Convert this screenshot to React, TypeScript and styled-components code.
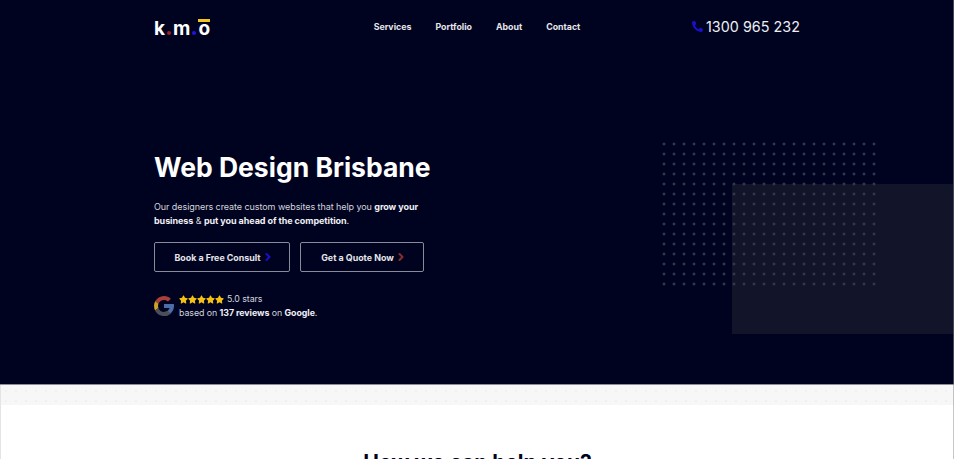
import { ChevronRight } from 'lucide-react';
import { FaPhoneAlt, FaStar } from 'react-icons/fa';
import styled, { createGlobalStyle } from 'styled-components';

const FONT = `Inter, "Liberation Sans", sans-serif`;

const GlobalStyle = createGlobalStyle`
  html, body {
    margin: 0;
    padding: 0;
    background: #fff;
    overflow: hidden;
  }
  body {
    font-family: ${FONT};
  }
`;

export default function App() {
  return (
    <Page>
      <GlobalStyle />
      <Hero>
        <Panel />
        <Dots />
        <Header>
          <Logo>
            <span>k</span>
            <LogoDot $color='#a01f28' />
            <span>m</span>
            <LogoDot $color='#2412e0' />
            <LogoO>o</LogoO>
          </Logo>
          <Nav>
            <NavLink href='#'>Services</NavLink>
            <NavLink href='#'>Portfolio</NavLink>
            <NavLink href='#'>About</NavLink>
            <NavLink href='#'>Contact</NavLink>
          </Nav>
          <Phone href='#'>
            <FaPhoneAlt color='#1c0fc8' size={11} />
            1300 965 232
          </Phone>
        </Header>
        <Content>
          <Title>Web Design Brisbane</Title>
          <Intro>
            Our designers create custom websites that help you <b>grow your business</b> &amp;{' '}
            <b>put you ahead of the competition</b>.
          </Intro>
          <Buttons>
            <Button href='#' $width={136}>
              Book a Free Consult
              <ChevronRight color='#1c0fc8' size={12} strokeWidth={4} />
            </Button>
            <Button href='#' $width={124}>
              Get a Quote Now
              <ChevronRight color='#8a2c2c' size={12} strokeWidth={4} />
            </Button>
          </Buttons>
          <Reviews>
            <GoogleIcon viewBox='4 4 40 40'>
              <path fill='#4a6fa8' d='M43.6 20.1H42V20H24v8h11.3c-1.6 4.7-6.1 8-11.3 8v8c11 0 20-9 20-20 0-1.3-.1-2.7-.4-3.9z' />
              <path fill='#a8403a' d='M6.3 14.7l6.6 4.8C14.7 15.1 19 12 24 12c3.1 0 5.8 1.2 8 3l5.7-5.7C34 6.1 29.3 4 24 4 16.3 4 9.7 8.3 6.3 14.7z' />
              <path fill='#c9a227' d='M6.3 14.7C4.8 17.5 4 20.7 4 24s.8 6.4 2.2 9.2l6.7-5.2c-.6-1.2-.9-2.6-.9-4s.4-3.1 1-4.5z' />
              <path fill='#4a4f58' d='M24 44c5.2 0 9.9-2 13.4-5.2l-6.2-5.2C29.2 35.1 26.7 36 24 36c-5.2 0-9.6-3.3-11.3-8l-6.5 5C9.5 39.6 16.2 44 24 44z' />
            </GoogleIcon>
            <ReviewText>
              <Rating>
                <Stars>
                  {[0, 1, 2, 3, 4].map((i) => (
                    <FaStar key={i} color='#f5c211' size={9} />
                  ))}
                </Stars>
                5.0 stars
              </Rating>
              <div>
                based on <b>137 reviews</b> on <b>Google</b>.
              </div>
            </ReviewText>
          </Reviews>
        </Content>
      </Hero>
      <Band />
      <Services>
        <Heading>How we can help you?</Heading>
      </Services>
      <EdgeLine />
    </Page>
  );
}

const Page = styled.div`
  position: relative;
  width: 954px;
  height: 459px;
  overflow: hidden;
  background: #fff;
`;
const Hero = styled.section`
  position: relative;
  height: 384px;
  background: #000320;
  border-bottom: 1px solid #8d8e9a;
  box-sizing: content-box;
`;
const Dots = styled.div`
  position: absolute;
  left: 662px;
  top: 142px;
  width: 220px;
  height: 150px;
  background-image: radial-gradient(circle at 2px 2px, #34364a 1.3px, transparent 1.7px);
  background-size: 10px 10px;
`;
const Panel = styled.div`
  position: absolute;
  left: 732px;
  top: 184px;
  width: 221px;
  height: 150px;
  background: #12142a;
`;
const Header = styled.header`
  position: relative;
  z-index: 2;
  display: grid;
  grid-template-columns: 1fr auto 1fr;
  align-items: center;
  width: 646px;
  height: 54px;
  margin: 0 auto;
`;
const Logo = styled.div`
  display: flex;
  align-items: baseline;
  justify-self: start;
  margin-top: 4px;
  font-size: 19px;
  line-height: 20px;
  font-weight: 700;
  color: #fff;
`;
const LogoDot = styled.i<{ $color: string }>`
  width: 4px;
  height: 4px;
  margin: 0 2px;
  border-radius: 50%;
  background: ${(p) => p.$color};
`;
const LogoO = styled.span`
  position: relative;
  &::before {
    content: '';
    position: absolute;
    left: 0;
    right: 0;
    top: 0;
    height: 3px;
    background: #f2c61f;
  }
`;
const Nav = styled.nav`
  display: flex;
  gap: 24px;
  margin-bottom: 2px;
`;
const NavLink = styled.a`
  font-size: 8.8px;
  font-weight: 700;
  color: #e6e6ea;
  text-decoration: none;
`;
const Phone = styled.a`
  justify-self: end;
  display: flex;
  align-items: center;
  gap: 3px;
  margin-bottom: 2px;
  font-size: 14.3px;
  font-weight: 400;
  letter-spacing: 0.05px;
  color: #eeeef2;
  text-decoration: none;
`;
const Content = styled.div`
  position: relative;
  z-index: 2;
  width: 646px;
  margin: 0 auto;
  padding-top: 96px;
`;
const Title = styled.h1`
  margin: 0;
  font-size: 26.5px;
  line-height: 34px;
  font-weight: 700;
  color: #fff;
`;
const Intro = styled.p`
  width: 290px;
  margin: 16px 0 0;
  font-size: 9px;
  line-height: 14px;
  letter-spacing: -0.07px;
  color: #d4d4dc;
  b {
    color: #f0f0f4;
  }
`;
const Buttons = styled.div`
  display: flex;
  gap: 10px;
  margin-top: 14px;
`;
const Button = styled.a<{ $width: number }>`
  box-sizing: border-box;
  display: flex;
  align-items: center;
  justify-content: center;
  gap: 1px;
  width: ${(p) => p.$width}px;
  height: 30px;
  border: 1px solid #8a8b98;
  border-radius: 2px;
  font-size: 8.9px;
  font-weight: 700;
  color: #e6e6ea;
  text-decoration: none;
  svg {
    margin-right: -4px;
  }
`;
const Reviews = styled.div`
  display: flex;
  align-items: center;
  gap: 5px;
  margin-top: 20px;
`;
const GoogleIcon = styled.svg`
  width: 20px;
  height: 20px;
`;
const ReviewText = styled.div`
  font-size: 8.8px;
  line-height: 14px;
  letter-spacing: -0.05px;
  color: #d4d4dc;
  b {
    color: #f0f0f4;
  }
`;
const Rating = styled.div`
  display: flex;
  align-items: center;
  gap: 3px;
`;
const Stars = styled.span`
  display: flex;
`;
const Band = styled.div`
  height: 20px;
  border-left: 1px solid #e4e4e4;
  background-color: #f7f7f8;
  background-image: radial-gradient(circle at 5px 6px, #f0f0f2 0.7px, transparent 1px);
  background-size: 10px 10px;
`;
const Services = styled.section`
  height: 54px;
  border-left: 1px solid #e4e4e4;
  padding-top: 46px;
  text-align: center;
`;
const Heading = styled.h2`
  margin: 0;
  font-size: 21px;
  line-height: 24px;
  font-weight: 700;
  color: #00021f;
`;
const EdgeLine = styled.div`
  position: absolute;
  top: 0;
  right: 0;
  bottom: 0;
  width: 1px;
  background: rgba(140, 140, 150, 0.5);
`;
